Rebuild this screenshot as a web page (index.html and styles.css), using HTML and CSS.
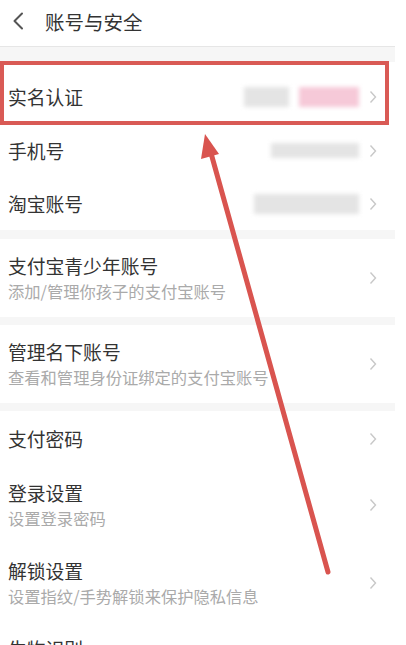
FILE: index.html
```html
<!DOCTYPE html>
<html lang="zh-CN">
<head>
  <meta charset="UTF-8" />
  <meta name="viewport" content="width=device-width, initial-scale=1.0" />
  <title>账号与安全</title>
  <link rel="stylesheet" href="styles.css">
</head>
<body>
  <div class="page">
    <div class="header">
      <svg class="back" width="12" height="18" viewBox="0 0 12 18"><path d="M10 1.5 L2.5 9 L10 16.5" fill="none" stroke="#555" stroke-width="2" stroke-linecap="round" stroke-linejoin="round"/></svg>
      <span class="title">账号与安全</span>
    </div>
    <div class="band band-top"></div>

    <div class="group">
      <div class="row row-first">
        <span class="label">实名认证</span>
        <span class="value">
          <i class="blur gray" style="width:45px"></i>
          <i class="blur pink" style="width:60px"></i>
        </span>
        <svg class="chev" viewBox="0 0 8 14"><path d="M1.5 1.5 L6.5 7 L1.5 12.5" fill="none" stroke="#c8c8c8" stroke-width="1.4"/></svg>
      </div>
      <div class="row">
        <span class="label">手机号</span>
        <span class="value"><i class="blur gray thin" style="width:88px"></i></span>
        <svg class="chev" viewBox="0 0 8 14"><path d="M1.5 1.5 L6.5 7 L1.5 12.5" fill="none" stroke="#c8c8c8" stroke-width="1.4"/></svg>
      </div>
      <div class="row">
        <span class="label">淘宝账号</span>
        <span class="value"><i class="blur gray" style="width:105px"></i></span>
        <svg class="chev" viewBox="0 0 8 14"><path d="M1.5 1.5 L6.5 7 L1.5 12.5" fill="none" stroke="#c8c8c8" stroke-width="1.4"/></svg>
      </div>
    </div>
    <div class="band band-a"></div>

    <div class="group">
      <div class="row row-tall">
        <div class="text">
          <div class="label">支付宝青少年账号</div>
          <div class="sub">添加/管理你孩子的支付宝账号</div>
        </div>
        <svg class="chev" viewBox="0 0 8 14"><path d="M1.5 1.5 L6.5 7 L1.5 12.5" fill="none" stroke="#c8c8c8" stroke-width="1.4"/></svg>
      </div>
    </div>
    <div class="band"></div>

    <div class="group">
      <div class="row row-tall">
        <div class="text">
          <div class="label">管理名下账号</div>
          <div class="sub">查看和管理身份证绑定的支付宝账号</div>
        </div>
        <svg class="chev" viewBox="0 0 8 14"><path d="M1.5 1.5 L6.5 7 L1.5 12.5" fill="none" stroke="#c8c8c8" stroke-width="1.4"/></svg>
      </div>
    </div>
    <div class="band"></div>

    <div class="group">
      <div class="row row-pay">
        <span class="label">支付密码</span>
        <svg class="chev" viewBox="0 0 8 14"><path d="M1.5 1.5 L6.5 7 L1.5 12.5" fill="none" stroke="#c8c8c8" stroke-width="1.4"/></svg>
      </div>
      <div class="row row-tall">
        <div class="text">
          <div class="label">登录设置</div>
          <div class="sub">设置登录密码</div>
        </div>
        <svg class="chev" viewBox="0 0 8 14"><path d="M1.5 1.5 L6.5 7 L1.5 12.5" fill="none" stroke="#c8c8c8" stroke-width="1.4"/></svg>
      </div>
      <div class="row row-tall">
        <div class="text">
          <div class="label">解锁设置</div>
          <div class="sub">设置指纹/手势解锁来保护隐私信息</div>
        </div>
        <svg class="chev" viewBox="0 0 8 14"><path d="M1.5 1.5 L6.5 7 L1.5 12.5" fill="none" stroke="#c8c8c8" stroke-width="1.4"/></svg>
      </div>
      <div class="row">
        <span class="label">生物识别</span>
      </div>
    </div>

    <!-- annotation overlay -->
    <div class="mark-box"></div>
    <svg class="arrow" width="406" height="645" viewBox="0 0 406 645">
      <line x1="328" y1="572" x2="209" y2="146" stroke="#d9544f" stroke-width="5" stroke-linecap="round"/>
      <polygon points="205,134 219,154 201,159" fill="#d9544f"/>
    </svg>
  </div>
</body>
</html>
```

FILE: styles.css
```css
body {
  margin: 0;
  background: #fff;
  font-family: "Noto Sans CJK SC", "Noto Sans", sans-serif;
  overflow: hidden;
}
.page {
  position: relative;
  width: 395px;
  height: 645px;
  overflow: hidden;
  background: #fff;
}
.header {
  height: 42px;
  padding-bottom: 4px;
  display: flex;
  align-items: center;
  padding-left: 12px;
  border-bottom: 1px solid #e6e6e6;
  box-sizing: content-box;
}
.back {
  margin-right: 21px;
}
.title {
  font-size: 19.5px;
  color: #333;
}
.band {
  height: 8px;
  background: #f6f6f6;
}
.band-top {
  height: 15px;
}
.band-a {
  height: 9px;
}
.row {
  height: 53px;
  display: flex;
  align-items: center;
  padding: 0 18px 0 8px;
}
.row-first {
  height: 62px;
  padding-top: 7px;
  box-sizing: border-box;
}
.row-tall {
  height: 78px;
}
.row-pay {
  height: 55px;
}
.label {
  font-size: 18.8px;
  color: #333;
  line-height: 26px;
}
.text {
  flex: 1;
}
.row > .label {
  flex: 1;
}
.sub {
  font-size: 16.3px;
  color: #aaa;
  line-height: 23px;
  margin-top: 1px;
}
.value {
  display: flex;
  gap: 10px;
  margin-right: 10px;
}
.blur {
  display: block;
  height: 20px;
  filter: blur(2px);
}
.blur.thin {
  height: 15px;
}
.gray {
  background: #e4e4e4;
}
.pink {
  background: #f6c9d8;
}
.chev {
  width: 8px;
  height: 14px;
  flex: none;
}
.mark-box {
  position: absolute;
  left: 0;
  top: 61px;
  width: 389px;
  height: 64px;
  border: 4px solid #d95a55;
  box-sizing: border-box;
}
.arrow {
  position: absolute;
  left: 0;
  top: 0;
  pointer-events: none;
}
```
